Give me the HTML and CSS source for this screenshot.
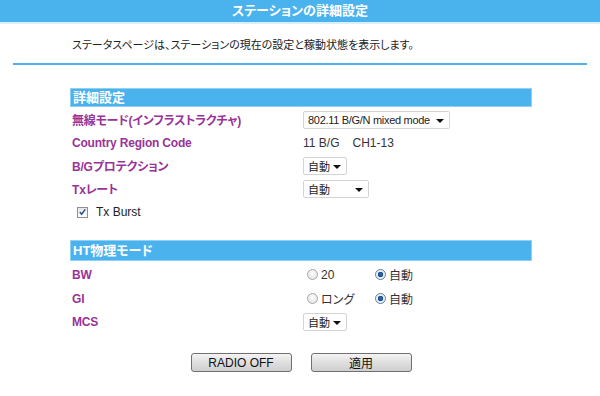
FILE: index.html
```html
<!DOCTYPE html>
<html>
<head>
    <meta charset="utf-8">
    <title>ステーションの詳細設定</title>
    <link rel="stylesheet" href="styles.css">
</head>

<body>

<div class="topbar">ステーションの詳細設定</div>
<p class="intro">ステータスページは、ステーションの現在の設定と稼動状態を表示します。</p>
<div class="rule"></div>

<div class="panel">
    <div class="section-title">詳細設定</div>
    <div class="row">
        <span class="label">無線モード(インフラストラクチャ)</span>
        <span class="value">
            <span class="select w-mode"><span class="select-text">802.11 B/G/N mixed mode</span><span class="arrow"></span></span>
        </span>
    </div>
    <div class="row">
        <span class="label">Country Region Code</span>
        <span class="value">11 B/G <span class="channel">CH1-13</span></span>
    </div>
    <div class="row">
        <span class="label">B/Gプロテクション</span>
        <span class="value">
            <span class="select w-small"><span class="select-text">自動</span><span class="arrow"></span></span>
        </span>
    </div>
    <div class="row">
        <span class="label">Txレート</span>
        <span class="value">
            <span class="select w-rate"><span class="select-text">自動</span><span class="arrow"></span></span>
        </span>
    </div>
    <div class="check-row">
        <span class="checkbox">
            <svg width="10" height="10" viewBox="0 0 10 10"><path d="M2 5 L4 7.5 L8 2" fill="none" stroke="#2a4f8a" stroke-width="1.6"/></svg>
        </span>
        Tx Burst
    </div>

    <div class="section-title second">HT物理モード</div>
    <div class="rows-ht">
        <div class="row">
            <span class="label">BW</span>
            <span class="value">
                <span class="option"><span class="radio"></span>20</span>
                <span class="option"><span class="radio on"></span>自動</span>
            </span>
        </div>
        <div class="row">
            <span class="label">GI</span>
            <span class="value">
                <span class="option"><span class="radio"></span>ロング</span>
                <span class="option"><span class="radio on"></span>自動</span>
            </span>
        </div>
        <div class="row">
            <span class="label">MCS</span>
            <span class="value">
                <span class="select w-small"><span class="select-text">自動</span><span class="arrow"></span></span>
            </span>
        </div>
    </div>
</div>

<div class="actions">
    <button class="button">RADIO OFF</button>
    <button class="button">適用</button>
</div>

</body>
</html>
```

FILE: styles.css
```css
body {
    margin: 0;
    background: #ffffff;
    font-family: 'Liberation Sans', 'Noto Sans CJK JP', sans-serif;
    font-size: 12px;
    color: #222222;
    font-feature-settings: "palt";
}

.topbar {
    height: 22px;
    line-height: 22px;
    background: #4ab3ee;
    border-bottom: 2px solid #d8effc;
    color: #ffffff;
    font-weight: bold;
    font-size: 13px;
    text-align: center;
}

.intro {
    margin: 0;
    padding: 13px 0 0 72px;
    height: 26px;
    line-height: 16px;
    font-size: 11px;
}

.rule {
    margin: 0 13px;
    height: 2px;
    background: #4ab3ee;
}

.panel {
    width: 462px;
    margin: 23px 0 0 70px;
}

.section-title {
    height: 17px;
    line-height: 17px;
    background: #4ab3ee;
    border: 1px solid #8fd1f6;
    color: #ffffff;
    font-weight: bold;
    font-size: 13px;
    padding-left: 2px;
}

.section-title.second {
    margin-top: 16px;
    height: 19px;
    line-height: 19px;
}

.row {
    display: grid;
    grid-template-columns: 233px 1fr;
    align-items: center;
    height: 23px;
}

.row:nth-child(2) {
    margin-top: 1px;
}

.rows-ht {
    padding-top: 2px;
}

.label {
    padding-left: 2px;
    color: #993399;
    font-weight: bold;
    letter-spacing: -0.2px;
}

.value {
    display: flex;
    align-items: center;
    color: #333333;
}

.channel {
    margin-left: 13px;
}

.select {
    position: relative;
    display: inline-flex;
    align-items: center;
    box-sizing: border-box;
    height: 18px;
    padding-left: 4px;
    border: 1px solid #d4d4d4;
    border-radius: 2px;
    background: #ffffff;
    color: #222222;
    font-size: 11px;
}

.select .arrow {
    position: absolute;
    right: 5px;
    top: 7px;
    border-left: 4px solid transparent;
    border-right: 4px solid transparent;
    border-top: 4px solid #111111;
}

.w-mode {
    width: 147px;
    letter-spacing: -0.3px;
}

.w-small {
    width: 44px;
}

.w-rate {
    width: 66px;
}

.check-row {
    display: flex;
    align-items: center;
    height: 24px;
    padding-left: 7px;
}

.checkbox {
    display: inline-flex;
    align-items: center;
    justify-content: center;
    box-sizing: border-box;
    width: 11px;
    height: 11px;
    margin-right: 8px;
    border: 1px solid #8e8f8f;
    background: linear-gradient(#e6e6e6, #ffffff);
}

.option {
    display: inline-flex;
    align-items: center;
    width: 68px;
    margin-left: 4px;
}

.option + .option {
    margin-left: 0;
}

.radio {
    display: inline-block;
    box-sizing: border-box;
    width: 11px;
    height: 11px;
    margin-right: 3px;
    border: 1px solid #a9a9a9;
    border-radius: 50%;
    background: radial-gradient(circle at 50% 40%, #ffffff, #dcdcdc);
}

.radio.on {
    border-color: #5a7da3;
    background: radial-gradient(circle, #2b6db1 0, #1c4f8a 2.5px, #dfe7ef 3px, #ffffff 5px);
}

.actions {
    display: flex;
    justify-content: center;
    gap: 19px;
    margin-top: 20px;
    padding-left: 2px;
}

.button {
    width: 101px;
    height: 19px;
    padding: 0;
    border: 1px solid #707070;
    border-radius: 3px;
    background: linear-gradient(#f4f4f4, #dedede 50%, #cfcfcf);
    font-family: 'Liberation Sans', 'Noto Sans CJK JP', sans-serif;
    font-size: 12px;
    color: #111111;
}
```
